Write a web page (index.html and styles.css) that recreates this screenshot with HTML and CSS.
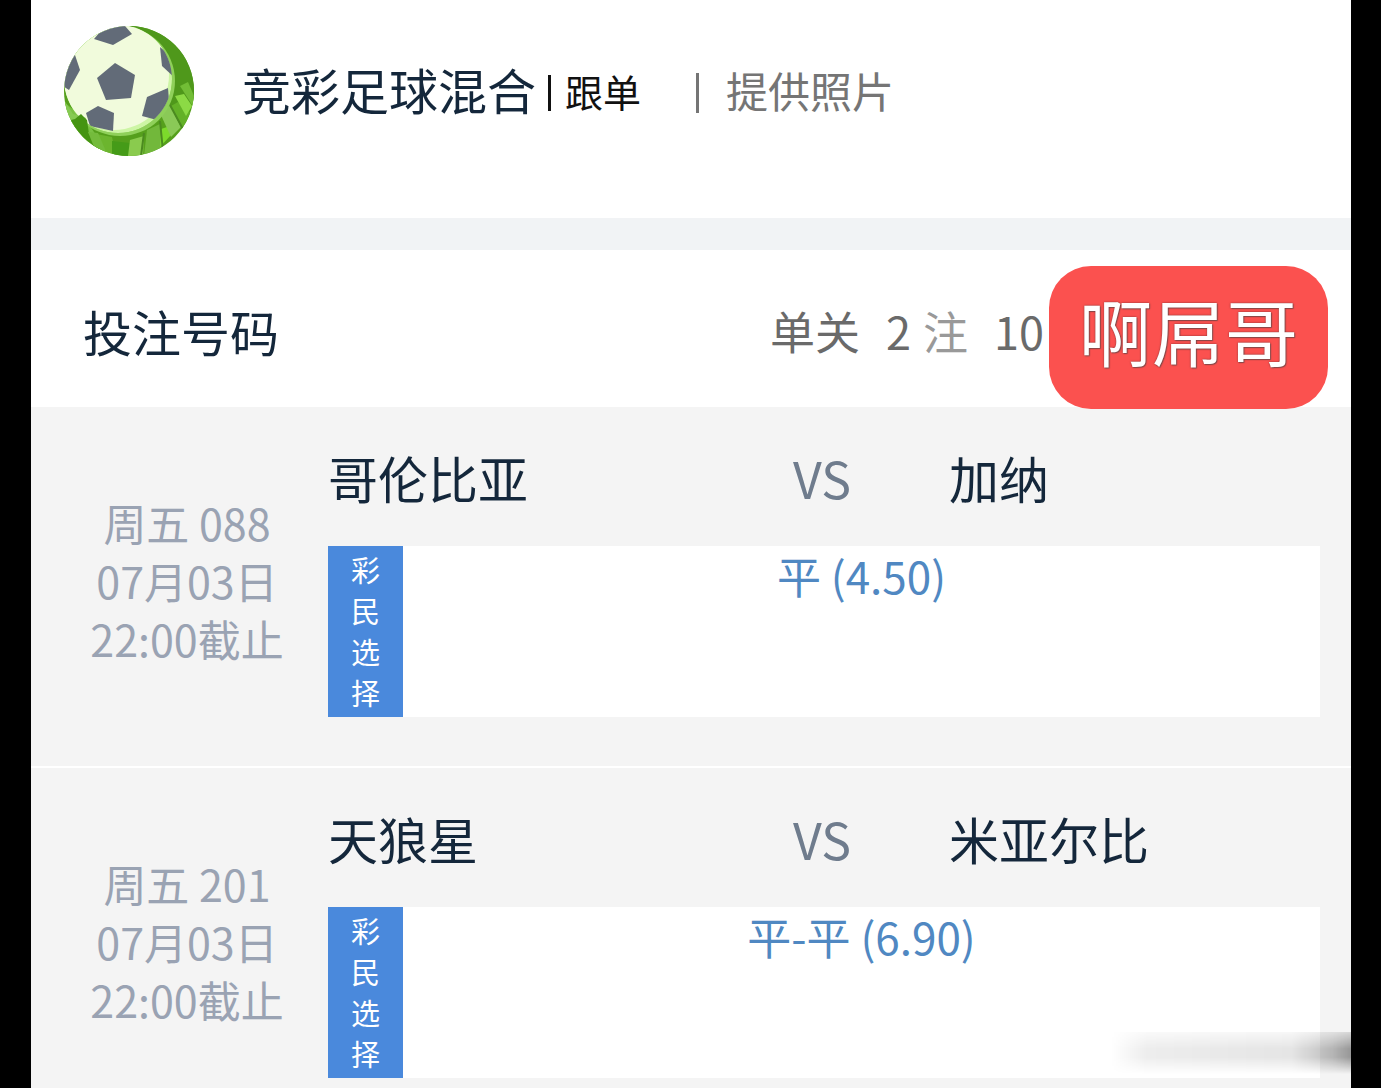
FILE: index.html
```html
<!DOCTYPE html>
<html lang="zh-CN">
<head>
    <meta charset="UTF-8">
    <meta name="viewport" content="width=device-width, initial-scale=1.0">
    <title>竞彩足球混合</title>
    <link rel="stylesheet" href="styles.css">
</head>
<body>

    <div class="page">
        <header class="top">
            <svg class="logo" viewBox="0 0 130 130" aria-hidden="true">
                <defs>
                    <clipPath id="logoClip"><circle cx="65" cy="65" r="65"/></clipPath>
                    <clipPath id="ballClip"><circle cx="54" cy="53" r="54"/></clipPath>
                </defs>
                <g clip-path="url(#logoClip)">
                    <rect width="130" height="130" fill="#559f1c"/>
                    <path d="M60 0h70v75l-25 5z" fill="#4f981b"/>
                    <!-- grass -->
                    <path d="M0 76l22 18 24 36H0z" fill="#79c143"/>
                    <path d="M22 106l26 5 4 19H34z" fill="#6cb52e"/>
                    <path d="M48 115l18 2v13H48z" fill="#459b18"/>
                    <path d="M66 114l14-4-1 20H64z" fill="#8acb4e"/>
                    <path d="M83 104l13-6 2 28-18 4z" fill="#72b83b"/>
                    <path d="M97 103l12-4-2 10-11 12z" fill="#7cda2b"/>
                    <path d="M96 87l10-8 11 22-10 10z" fill="#8ac957"/>
                    <path d="M107 80l7-4 16 14-12 14z" fill="#63b127"/>
                    <path d="M111 70l9-2 8 12-6 10z" fill="#8cda45"/>
                    <path d="M116 60l8-4 6 14v12z" fill="#72bd36"/>
                    <path d="M80 107l-3 23M106 79l14 26M96 95l3 30" fill="none" stroke="#4b8a20" stroke-width="2"/>
                    <circle cx="56" cy="55" r="55" fill="#8fd05a"/>
                    <!-- ball -->
                    <g clip-path="url(#ballClip)">
                        <circle cx="54" cy="53" r="54" fill="#cdf5a5"/>
                        <circle cx="50" cy="49" r="55" fill="#f1fbdc"/>
                        <g fill="#626b78">
                            <path d="M51 37l20 12-4 23-25 2-9-22z"/>
                            <path d="M30 13L41 0h20l7 8-19 11z"/>
                            <path d="M11 29l5 15-11 20-6-4V32z"/>
                            <path d="M34 80l16 7-1 18-23-5-4-13z"/>
                            <path d="M83 71l21-9 1 13-12 19-15-4z"/>
                            <path d="M96 21l14 12v18l-12-11z"/>
                        </g>
                    </g>
                    <!-- grass in front of the ball -->
                    <path d="M0 74l9 14 13 4-6 12L0 94z" fill="#86ca52"/>
                    <path d="M3 95l8-2 6-5 6 6 2 14 16 22H22z" fill="#459412"/>
                    <path d="M24 106l10 1 10 23-12-4z" fill="#74bb3c"/>
                </g>
            </svg>
            <h1 class="title">竞彩足球混合</h1>
            <span class="bar"></span>
            <span class="follow">跟单</span>
            <span class="bar bar-gray"></span>
            <span class="photo">提供照片</span>
        </header>

        <main>
            <div class="bet-head">
                <h2 class="title">投注号码</h2>
                <div class="bet-info">
                    <span>单关</span>
                    <span class="bet-count">2<span class="unit">注</span></span>
                    <span>10</span>
                </div>
                <span class="stamp">啊屌哥</span>
            </div>

            <section class="match">
                <div class="match-time">
                    <p>周五 088</p>
                    <p>07月03日</p>
                    <p>22:00截止</p>
                </div>
                <div class="match-body">
                    <div class="teams">
                        <span>哥伦比亚</span>
                        <span class="vs">VS</span>
                        <span>加纳</span>
                    </div>
                    <div class="choice">
                        <div class="choice-label">彩民选择</div>
                        <div class="choice-value">平 (4.50)</div>
                    </div>
                </div>
            </section>

            <section class="match">
                <div class="match-time">
                    <p>周五 201</p>
                    <p>07月03日</p>
                    <p>22:00截止</p>
                </div>
                <div class="match-body">
                    <div class="teams">
                        <span>天狼星</span>
                        <span class="vs">VS</span>
                        <span>米亚尔比</span>
                    </div>
                    <div class="choice">
                        <div class="choice-label">彩民选择</div>
                        <div class="choice-value">平-平 (6.90)</div>
                    </div>
                </div>
            </section>
        </main>

        <div class="smudge"></div>
    </div>

</body>
</html>
```

FILE: styles.css
```css
* {
    box-sizing: border-box;
}

body {
    font-family: "Noto Sans CJK SC", sans-serif;
    margin: 0;
    padding: 0 30px 0 31px;
    background-color: #000;
}

h1, h2, p {
    margin: 0;
    font-weight: normal;
}

.page {
    position: relative;
    background-color: #f4f4f4;
}

.top {
    display: flex;
    align-items: center;
    padding: 26px 33px 62px;
    background-color: #fff;
    border-bottom: 32px solid #f1f3f5;
}

.logo {
    width: 130px;
    height: 130px;
    margin-right: 48px;
}

.title {
    font-size: 49px;
    line-height: 72px;
    color: #14273b;
}

.top .title {
    padding-bottom: 4px;
}

.bar {
    width: 3px;
    height: 36px;
    margin: 4px 14px 0 12px;
    background-color: #111;
}

.bar-gray {
    margin: 4px 27px 0 55px;
    height: 40px;
    background-color: #757575;
}

.follow {
    font-size: 38px;
    line-height: 56px;
    color: #111;
}

.photo {
    font-size: 42px;
    line-height: 56px;
    padding-bottom: 2px;
    color: #757575;
}

.bet-head {
    position: relative;
    display: flex;
    align-items: center;
    justify-content: space-between;
    padding: 45px 307px 40px 52px;
    background-color: #fff;
}

.bet-info {
    display: flex;
    gap: 26px;
    font-size: 45px;
    line-height: 72px;
    color: #6a6a6a;
}

.bet-count {
    display: flex;
    gap: 12px;
}

.unit {
    color: #999;
}

.stamp {
    position: absolute;
    top: 16px;
    right: 23px;
    padding: 10px 30px 27px;
    border-radius: 42px;
    background-color: #fb514f;
    color: #fff;
    font-size: 73px;
    line-height: 106px;
    text-shadow: 0 0 2px #703030, 1px 1px 1px #905050;
}

.match {
    display: flex;
    padding: 34px 31px 49px 15px;
    border-bottom: 2px solid #fff;
}

.match:last-child {
    padding-bottom: 10px;
    border-bottom: none;
}

.match-time {
    flex: none;
    width: 282px;
    padding-top: 52px;
    font-size: 43px;
    line-height: 58px;
    text-align: center;
    color: #9aa3b3;
}

.match-body {
    flex: 1;
}

.teams {
    display: grid;
    grid-template-columns: 465fr 156fr 371fr;
    margin-bottom: 33px;
    font-size: 50px;
    line-height: 72px;
    color: #14273b;
}

.vs {
    color: #6f7c8d;
}

.choice {
    display: flex;
    background-color: #fff;
}

.choice-label {
    width: 75px;
    padding: 3px 23px 4px;
    background-color: #4a89dc;
    color: #fff;
    font-size: 29px;
    line-height: 41px;
}

.choice-value {
    flex: 1;
    font-size: 44px;
    line-height: 58px;
    text-align: center;
    color: #5088c2;
}

.smudge {
    position: absolute;
    right: 0;
    bottom: 14px;
    width: 240px;
    height: 42px;
    background: linear-gradient(to right, rgba(0, 0, 0, 0), rgba(0, 0, 0, 0.07) 15%, rgba(0, 0, 0, 0.1) 75%, rgba(0, 0, 0, 0.25) 92%, rgba(0, 0, 0, 0.38));
    -webkit-mask-image: linear-gradient(rgba(0, 0, 0, 0.3), #000 40%, #000 60%, transparent);
    mask-image: linear-gradient(rgba(0, 0, 0, 0.3), #000 40%, #000 60%, transparent);
}
```
